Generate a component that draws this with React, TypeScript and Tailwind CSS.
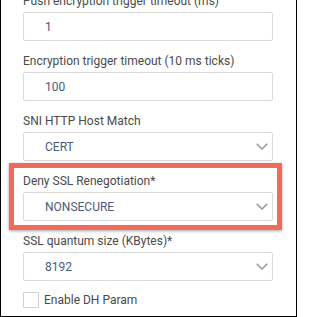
import React from "react";

function Chevron() {
  return (
    <svg width="12" height="7" viewBox="0 0 12 7" className="block">
      <path d="M0.7 0.7 L6 6 L11.3 0.7" fill="none" stroke="#8a8f99" strokeWidth="1.3" />
    </svg>
  );
}

function Field({ label, value, select, first }: { label: string; value: string; select?: boolean; first?: boolean }) {
  return (
    <div className={first ? "-mt-[9px]" : "pt-[10px]"}>
      <div className="h-[20px] leading-[20px] text-[12px] text-[#4a4a4a] whitespace-nowrap">{label}</div>
      <div className="mt-[1px] h-[29px] w-[250px] border border-[#dadada] rounded-[2px] bg-white pl-[21px] pr-[4px] flex items-center justify-between text-[12px] text-[#4b5b7c]">
        <span>{value}</span>
        {select && <Chevron />}
      </div>
    </div>
  );
}

export default function App() {
  return (
    <div className="w-[297px] h-[317px] overflow-hidden bg-white border-l border-r border-b border-black font-['Roboto','Liberation_Sans',sans-serif]">
      <div className="pl-[22px]">
        <Field first label="Push encryption trigger timeout (ms)" value="1" />
        <Field label="Encryption trigger timeout (10 ms ticks)" value="100" />
        <Field label="SNI HTTP Host Match" value="CERT" select />
        <div className="relative">
          <Field label="Deny SSL Renegotiation*" value="NONSECURE" select />
          <div className="absolute left-[-14px] right-[14px] top-[2px] bottom-[-9px] border-[5px] border-[#f06b5b] shadow-[0_1px_3px_rgba(0,0,0,0.35)] pointer-events-none" />
        </div>
        <Field label="SSL quantum size (KBytes)*" value="8192" select />
        <div className="mt-[11px] flex items-center h-[16px]">
          <div className="w-[16px] h-[16px] border border-[#cfcfcf] rounded-[1px] bg-white" />
          <span className="ml-[5px] text-[12px] text-[#4a4a4a] leading-[16px]">Enable DH Param</span>
        </div>
      </div>
    </div>
  );
}
